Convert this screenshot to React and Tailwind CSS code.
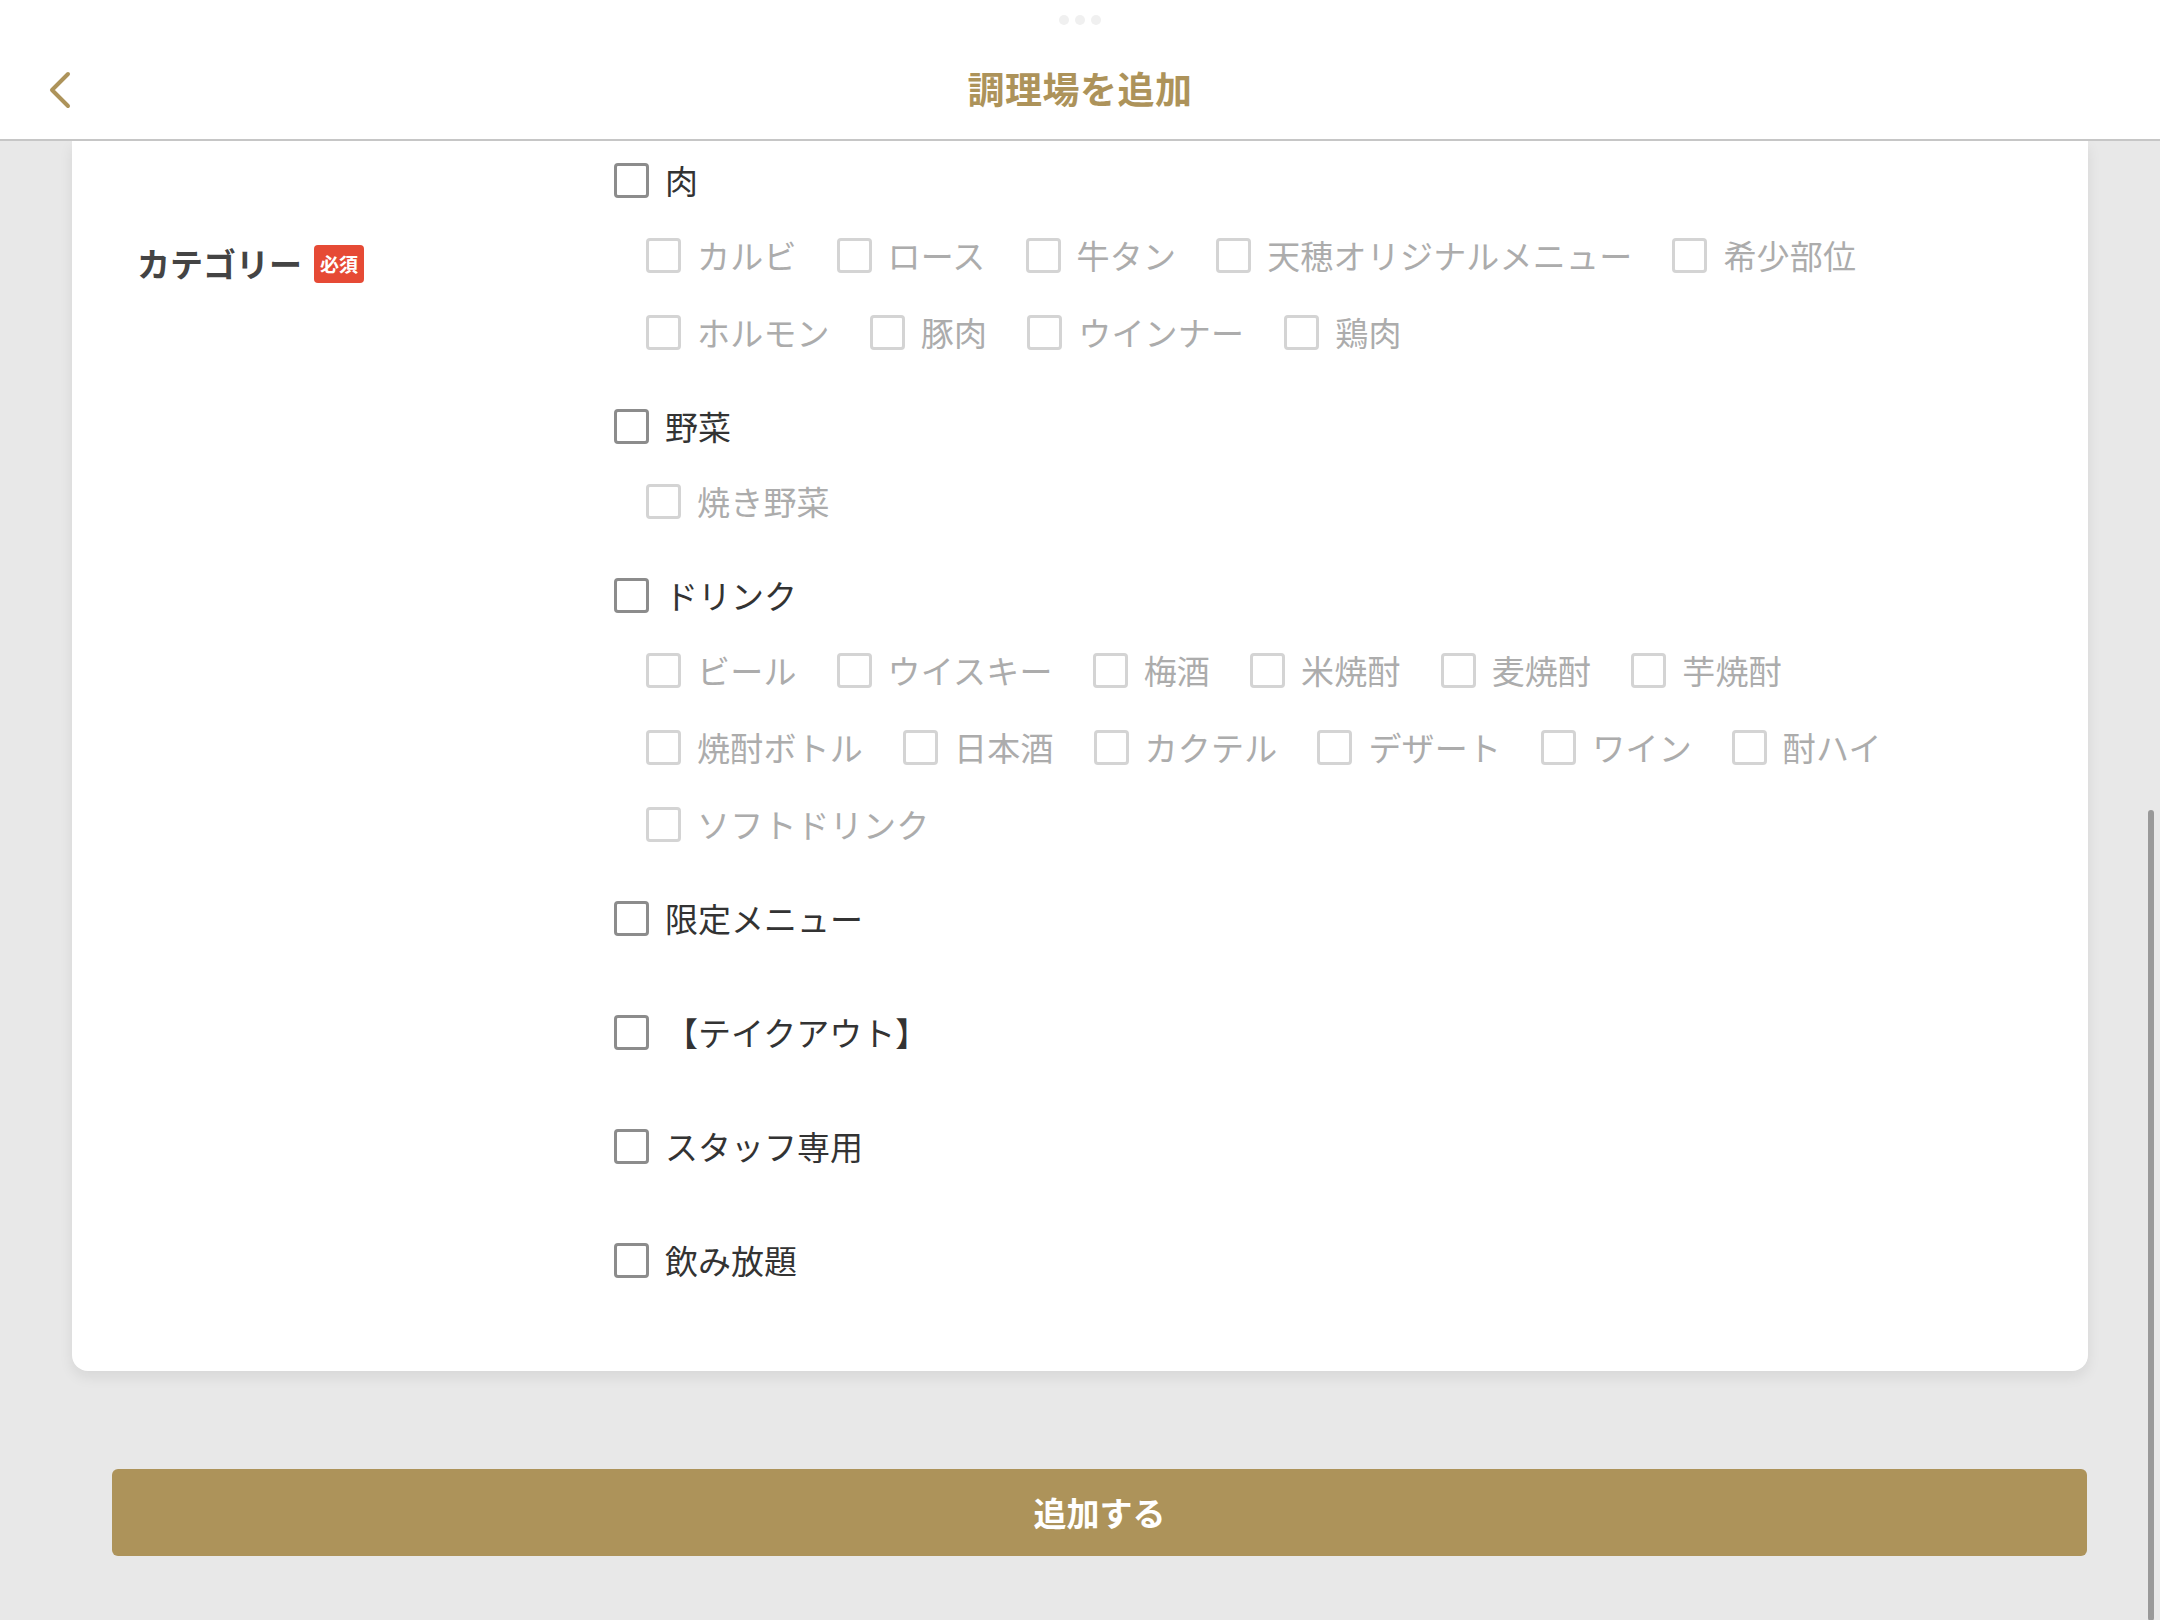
import React from "react";

const groups = [
  {
    name: "肉",
    subs: ["カルビ", "ロース", "牛タン", "天穂オリジナルメニュー", "希少部位", "ホルモン", "豚肉", "ウインナー", "鶏肉"],
  },
  { name: "野菜", subs: ["焼き野菜"] },
  {
    name: "ドリンク",
    subs: ["ビール", "ウイスキー", "梅酒", "米焼酎", "麦焼酎", "芋焼酎", "焼酎ボトル", "日本酒", "カクテル", "デザート", "ワイン", "酎ハイ", "ソフトドリンク"],
  },
  { name: "限定メニュー", subs: [] },
  { name: "【テイクアウト】", subs: [] },
  { name: "スタッフ専用", subs: [] },
  { name: "飲み放題", subs: [] },
];

function Box({ sub }) {
  return (
    <span
      className={
        sub
          ? "w-[35px] h-[35px] shrink-0 rounded-[4px] border-[3px] border-[#d4d4d4] bg-white"
          : "w-[35px] h-[35px] shrink-0 rounded-[4px] border-[3.5px] border-[#8c8c8c] bg-white"
      }
    />
  );
}

export default function App() {
  return (
    <div
      className="relative min-h-[1620px] bg-[#e8e8e8]"
      style={{ fontFamily: '"Noto Sans CJK JP", "Noto Sans", sans-serif' }}
    >
      {/* header */}
      <header className="relative h-[141px] bg-white border-b-2 border-[#c6c6c6] flex items-start justify-center pt-[60px]">
        <div className="absolute top-[15px] left-1/2 -translate-x-1/2 flex gap-[6px]">
          <span className="w-[10px] h-[10px] rounded-full bg-[#f0f0f0]" />
          <span className="w-[10px] h-[10px] rounded-full bg-[#f0f0f0]" />
          <span className="w-[10px] h-[10px] rounded-full bg-[#f0f0f0]" />
        </div>
        <button className="absolute left-[44px] top-[68px] w-[30px] h-[44px] flex items-center justify-center">
          <svg width="26" height="40" viewBox="0 0 26 40" fill="none">
            <path d="M22 4 L6 20 L22 36" stroke="#ad935a" strokeWidth="4" strokeLinecap="round" strokeLinejoin="round" />
          </svg>
        </button>
        <h1 className="text-[37px] leading-[56px] font-bold text-[#ad935a] tracking-[0.5px]">調理場を追加</h1>
      </header>

      {/* form card */}
      <div className="ml-[72px] mr-[72px] bg-white rounded-b-[16px] shadow-[0_6px_14px_rgba(0,0,0,0.08)] flex pt-[15px] pb-[21px]">
        <div className="w-[542px] shrink-0 pl-[65px] pt-[84px]">
          <div className="h-[48px] flex items-center">
            <span className="text-[33px] font-bold text-[#444]">カテゴリー</span>
            <span className="ml-[12px] w-[50px] h-[38px] rounded-[4px] bg-[#e64a35] text-white text-[19px] font-bold flex items-center justify-center">
              必須
            </span>
          </div>
        </div>

        <div className="flex-1 pr-[150px]">
          {groups.map((g) => (
            <div key={g.name} className={g.subs.length ? "pb-[46px]" : "pb-[66px]"}>
              <label className="h-[48px] flex items-center gap-[16px]">
                <Box />
                <span className="text-[33px] text-[#333] leading-none">{g.name}</span>
              </label>
              {g.subs.length > 0 && (
                <div className="mt-[27px] pl-[32px] flex flex-wrap gap-x-[40px] gap-y-[29px]">
                  {g.subs.map((s) => (
                    <label key={s} className="h-[48px] flex items-center gap-[16px]">
                      <Box sub />
                      <span className="text-[33px] text-[#acacac] leading-none whitespace-nowrap tracking-[0.2px]">{s}</span>
                    </label>
                  ))}
                </div>
              )}
            </div>
          ))}
        </div>
      </div>

      {/* submit */}
      <div className="ml-[112px] mr-[73px] mt-[98px] pb-[65px]">
        <button className="w-full h-[87px] rounded-[6px] bg-[#ad935a] text-white text-[33px] font-bold">
          追加する
        </button>
      </div>

      {/* scrollbar */}
      <div className="absolute right-[6px] top-[810px] bottom-0 w-[6px] rounded-full bg-[#999]" />
    </div>
  );
}
